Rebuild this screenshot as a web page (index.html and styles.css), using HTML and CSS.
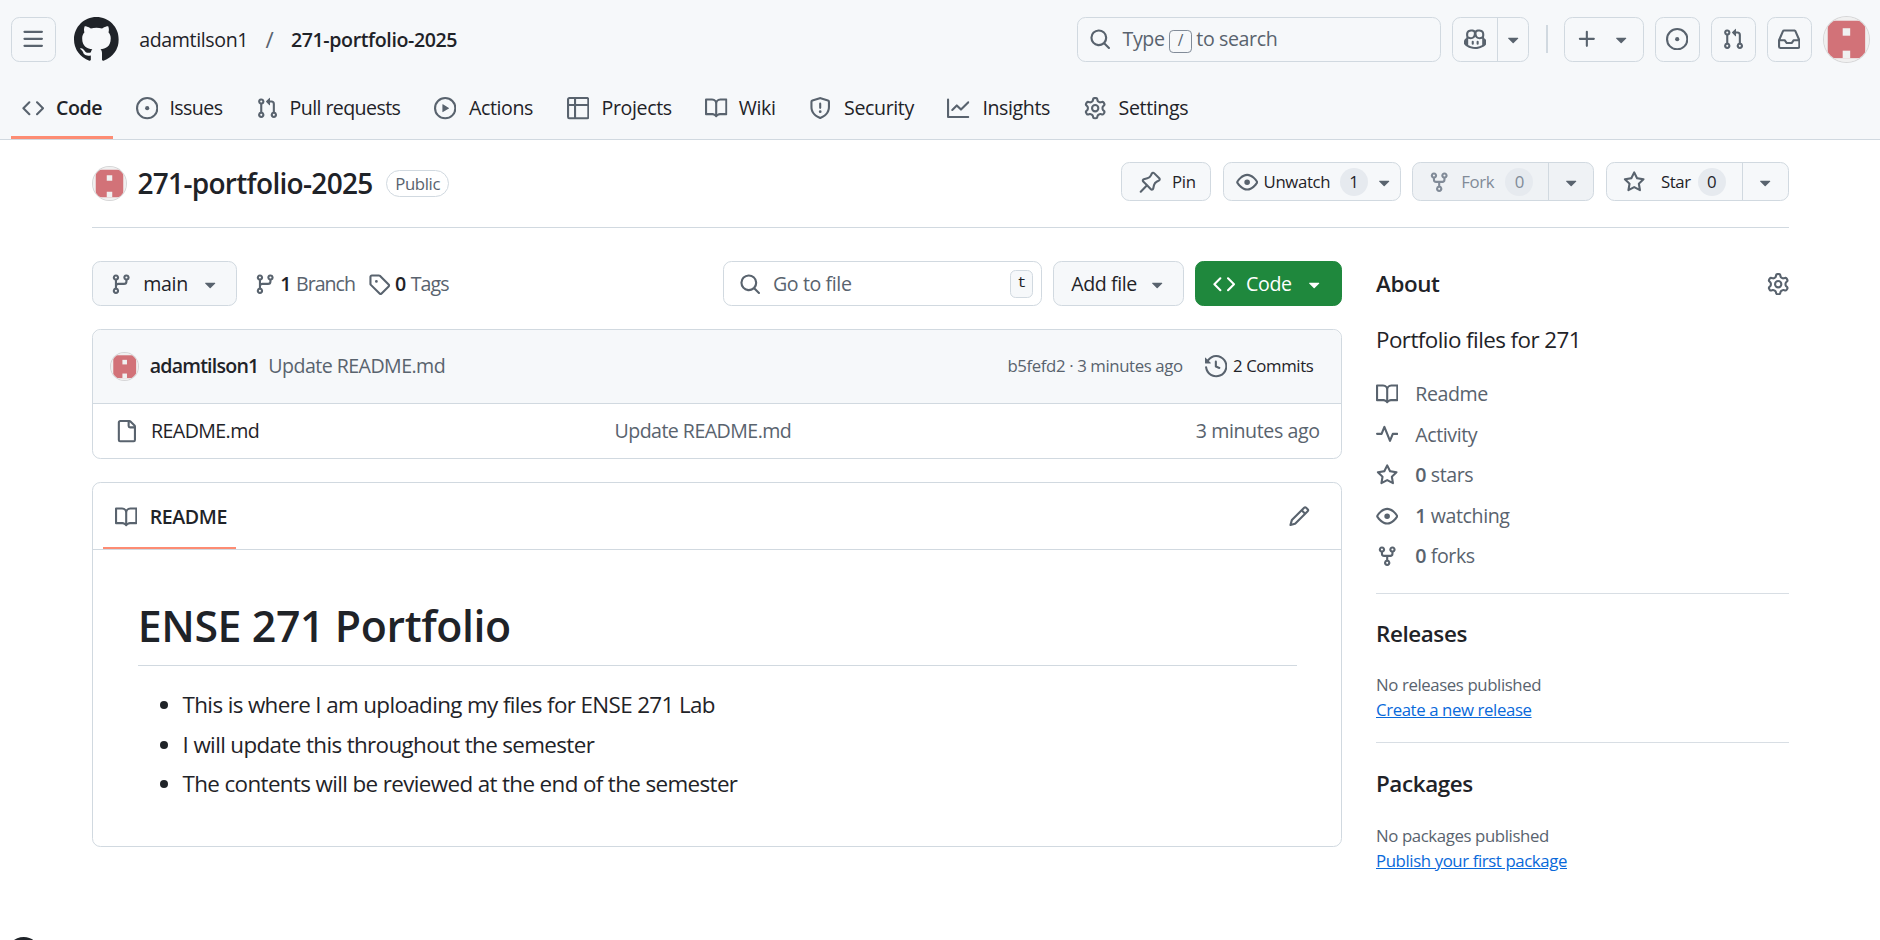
FILE: index.html
```html
<!DOCTYPE html>
<html lang="en">
<head>
  <meta charset="UTF-8" />
  <title>adamtilson1/271-portfolio-2025</title>
  <link rel="stylesheet" href="styles.css">
</head>
<body>

<svg class="sprite" xmlns="http://www.w3.org/2000/svg">
  <symbol id="i-mark" viewBox="0 0 16 16"><path d="M8 0c4.42 0 8 3.58 8 8a8.013 8.013 0 0 1-5.45 7.59c-.4.08-.55-.17-.55-.38 0-.27.01-1.13.01-2.2 0-.75-.25-1.23-.54-1.48 1.78-.2 3.65-.88 3.65-3.95 0-.88-.31-1.59-.82-2.15.08-.2.36-1.02-.08-2.12 0 0-.67-.22-2.2.82-.64-.18-1.32-.27-2-.27-.68 0-1.36.09-2 .27-1.53-1.03-2.2-.82-2.2-.82-.44 1.1-.16 1.92-.08 2.12-.51.56-.82 1.28-.82 2.15 0 3.06 1.86 3.75 3.64 3.95-.23.2-.44.55-.51 1.07-.46.21-1.61.55-2.33-.66-.15-.24-.6-.83-1.23-.82-.67.01-.27.38.01.53.34.19.73.9.82 1.13.16.45.68 1.31 2.69.94 0 .67.01 1.3.01 1.49 0 .21-.15.45-.55.38A7.995 7.995 0 0 1 0 8c0-4.42 3.58-8 8-8Z"/></symbol>
  <symbol id="i-bars" viewBox="0 0 16 16"><path d="M1 2.75A.75.75 0 0 1 1.75 2h12.5a.75.75 0 0 1 0 1.5H1.75A.75.75 0 0 1 1 2.75Zm0 5A.75.75 0 0 1 1.75 7h12.5a.75.75 0 0 1 0 1.5H1.75A.75.75 0 0 1 1 7.75ZM1.75 12h12.5a.75.75 0 0 1 0 1.5H1.75a.75.75 0 0 1 0-1.5Z"/></symbol>
  <symbol id="i-code" viewBox="0 0 16 16"><path d="m11.28 3.22 4.25 4.25a.75.75 0 0 1 0 1.06l-4.25 4.25a.749.749 0 0 1-1.275-.326.749.749 0 0 1 .215-.734L13.94 8l-3.72-3.72a.749.749 0 0 1 .326-1.275.749.749 0 0 1 .734.215Zm-6.56 0a.751.751 0 0 1 1.042.018.751.751 0 0 1 .018 1.042L2.06 8l3.72 3.72a.749.749 0 0 1-.326 1.275.749.749 0 0 1-.734-.215L.47 8.53a.75.75 0 0 1 0-1.06Z"/></symbol>
  <symbol id="i-issue" viewBox="0 0 16 16"><path d="M8 9.5a1.5 1.5 0 1 0 0-3 1.5 1.5 0 0 0 0 3Z"/><path d="M8 0a8 8 0 1 1 0 16A8 8 0 0 1 8 0ZM1.5 8a6.5 6.5 0 1 0 13 0 6.5 6.5 0 0 0-13 0Z"/></symbol>
  <symbol id="i-pr" viewBox="0 0 16 16"><path d="M1.5 3.25a2.25 2.25 0 1 1 3 2.122v5.256a2.251 2.251 0 1 1-1.5 0V5.372A2.25 2.25 0 0 1 1.5 3.25Zm5.677-.177L9.573.677A.25.25 0 0 1 10 .854V2.5h1A2.5 2.5 0 0 1 13.5 5v5.628a2.251 2.251 0 1 1-1.5 0V5a1 1 0 0 0-1-1h-1v1.646a.25.25 0 0 1-.427.177L7.177 3.427a.25.25 0 0 1 0-.354ZM3.75 2.5a.75.75 0 1 0 0 1.5.75.75 0 0 0 0-1.5Zm0 9.5a.75.75 0 1 0 0 1.5.75.75 0 0 0 0-1.5Zm8.25.75a.75.75 0 1 0 1.5 0 .75.75 0 0 0-1.5 0Z"/></symbol>
  <symbol id="i-play" viewBox="0 0 16 16"><path d="M8 0a8 8 0 1 1 0 16A8 8 0 0 1 8 0ZM1.5 8a6.5 6.5 0 1 0 13 0 6.5 6.5 0 0 0-13 0Zm4.879-2.773 4.264 2.559a.25.25 0 0 1 0 .428l-4.264 2.559A.25.25 0 0 1 6 10.559V5.442a.25.25 0 0 1 .379-.215Z"/></symbol>
  <symbol id="i-table" viewBox="0 0 16 16"><path d="M0 1.75C0 .784.784 0 1.75 0h12.5C15.216 0 16 .784 16 1.75v12.5A1.75 1.75 0 0 1 14.25 16H1.75A1.75 1.75 0 0 1 0 14.25ZM6.5 6.5v8h7.75a.25.25 0 0 0 .25-.25V6.5Zm8-1.5V1.75a.25.25 0 0 0-.25-.25H6.5V5Zm-13 1.5v7.75c0 .138.112.25.25.25H5v-8ZM5 5V1.5H1.75a.25.25 0 0 0-.25.25V5Z"/></symbol>
  <symbol id="i-book" viewBox="0 0 16 16"><path d="M0 1.75A.75.75 0 0 1 .75 1h4.253c1.227 0 2.317.59 3 1.501A3.743 3.743 0 0 1 11.006 1h4.245a.75.75 0 0 1 .75.75v10.5a.75.75 0 0 1-.75.75h-4.507a2.25 2.25 0 0 0-1.591.659l-.622.621a.75.75 0 0 1-1.06 0l-.622-.621A2.25 2.25 0 0 0 5.258 13H.75a.75.75 0 0 1-.75-.75Zm7.251 10.324.004-5.073-.002-2.253A2.25 2.25 0 0 0 5.003 2.5H1.5v9h3.757a3.75 3.75 0 0 1 1.994.574ZM8.755 4.75l-.004 7.322a3.752 3.752 0 0 1 1.992-.572H14.5v-9h-3.495a2.25 2.25 0 0 0-2.25 2.25Z"/></symbol>
  <symbol id="i-shield" viewBox="0 0 16 16"><path d="M7.467.133a1.748 1.748 0 0 1 1.066 0l5.25 1.68A1.75 1.75 0 0 1 15 3.48V7c0 1.566-.32 3.182-1.303 4.682-.983 1.498-2.585 2.813-5.032 3.855a1.697 1.697 0 0 1-1.33 0c-2.447-1.042-4.049-2.357-5.032-3.855C1.32 10.182 1 8.566 1 7V3.48a1.75 1.75 0 0 1 1.217-1.667Zm.61 1.429a.25.25 0 0 0-.153 0l-5.25 1.68a.25.25 0 0 0-.174.238V7c0 1.358.275 2.666 1.057 3.86.784 1.194 2.121 2.34 4.366 3.297a.196.196 0 0 0 .154 0c2.245-.956 3.582-2.104 4.366-3.298C13.225 9.666 13.5 8.36 13.5 7V3.48a.251.251 0 0 0-.174-.237l-5.25-1.68ZM8.75 4.75v3a.75.75 0 0 1-1.5 0v-3a.75.75 0 0 1 1.5 0ZM9 10.5a1 1 0 1 1-2 0 1 1 0 0 1 2 0Z"/></symbol>
  <symbol id="i-graph" viewBox="0 0 16 16"><path d="M1.5 1.75V13.5h13.75a.75.75 0 0 1 0 1.5H.75a.75.75 0 0 1-.75-.75V1.75a.75.75 0 0 1 1.5 0Zm14.28 2.53-5.25 5.25a.75.75 0 0 1-1.06 0L7 7.06 4.28 9.78a.751.751 0 0 1-1.042-.018.751.751 0 0 1-.018-1.042l3.25-3.25a.75.75 0 0 1 1.06 0L10 7.94l4.72-4.72a.751.751 0 0 1 1.042.018.751.751 0 0 1 .018 1.042Z"/></symbol>
  <symbol id="i-gear" viewBox="0 0 16 16"><path d="M8 0a8.2 8.2 0 0 1 .701.031C9.444.095 9.99.645 10.16 1.29l.288 1.107c.018.066.079.158.212.224.231.114.454.243.668.386.123.082.233.09.299.071l1.103-.303c.644-.176 1.392.021 1.82.63.27.385.506.792.704 1.218.315.675.111 1.422-.364 1.891l-.814.806c-.049.048-.098.147-.088.294.016.257.016.515 0 .772-.01.147.038.246.088.294l.814.806c.475.469.679 1.216.364 1.891a7.977 7.977 0 0 1-.704 1.217c-.428.61-1.176.807-1.82.63l-1.102-.302c-.067-.019-.177-.011-.3.071a5.909 5.909 0 0 1-.668.386c-.133.066-.194.158-.211.224l-.29 1.106c-.168.646-.715 1.196-1.458 1.26a8.006 8.006 0 0 1-1.402 0c-.743-.064-1.289-.614-1.458-1.26l-.289-1.106c-.018-.066-.079-.158-.212-.224a5.738 5.738 0 0 1-.668-.386c-.123-.082-.233-.09-.299-.071l-1.103.303c-.644.176-1.392-.021-1.82-.63a8.12 8.12 0 0 1-.704-1.218c-.315-.675-.111-1.422.363-1.891l.815-.806c.05-.048.098-.147.088-.294a6.214 6.214 0 0 1 0-.772c.01-.147-.038-.246-.088-.294l-.815-.806C.635 6.045.431 5.298.746 4.623a7.92 7.92 0 0 1 .704-1.217c.428-.61 1.176-.807 1.82-.63l1.102.302c.067.019.177.011.3-.071.214-.143.437-.272.668-.386.133-.066.194-.158.211-.224l.29-1.106C6.009.645 6.556.095 7.299.03 7.53.01 7.764 0 8 0Zm-.571 1.525c-.036.003-.108.036-.137.146l-.289 1.105c-.147.561-.549.967-.998 1.189-.173.086-.34.183-.5.29-.417.278-.97.423-1.529.27l-1.103-.303c-.109-.03-.175.016-.195.045-.22.312-.412.644-.573.99-.014.031-.021.11.059.19l.815.806c.411.406.562.957.53 1.456a4.709 4.709 0 0 0 0 .582c.032.499-.119 1.05-.53 1.456l-.815.806c-.081.08-.073.159-.059.19.162.346.353.677.573.989.02.03.085.076.195.046l1.102-.303c.56-.153 1.113-.008 1.53.27.161.107.328.204.501.29.447.222.85.629.997 1.189l.289 1.105c.029.109.101.143.137.146a6.6 6.6 0 0 0 1.142 0c.036-.003.108-.036.137-.146l.289-1.105c.147-.561.549-.967.998-1.189.173-.086.34-.183.5-.29.417-.278.97-.423 1.529-.27l1.103.303c.109.029.175-.016.195-.045.22-.313.411-.644.573-.99.014-.031.021-.11-.059-.19l-.815-.806c-.411-.406-.562-.957-.53-1.456a4.709 4.709 0 0 0 0-.582c-.032-.499.119-1.05.53-1.456l.815-.806c.081-.08.073-.159.059-.19a6.464 6.464 0 0 0-.573-.989c-.02-.03-.085-.076-.195-.046l-1.102.303c-.56.153-1.113.008-1.53-.27a4.44 4.44 0 0 0-.501-.29c-.447-.222-.85-.629-.997-1.189l-.289-1.105c-.029-.11-.101-.143-.137-.146a6.6 6.6 0 0 0-1.142 0ZM11 8a3 3 0 1 1-6 0 3 3 0 0 1 6 0ZM9.5 8a1.5 1.5 0 1 0-3.001.001A1.5 1.5 0 0 0 9.5 8Z"/></symbol>
  <symbol id="i-search" viewBox="0 0 16 16"><path d="M10.68 11.74a6 6 0 0 1-7.922-8.982 6 6 0 0 1 8.982 7.922l3.04 3.04a.749.749 0 0 1-.326 1.275.749.749 0 0 1-.734-.215ZM11.5 7a4.499 4.499 0 1 0-8.997 0A4.499 4.499 0 0 0 11.5 7Z"/></symbol>
  <symbol id="i-copilot" viewBox="0 0 16 16"><path d="M7.998 15.035c-4.562 0-7.873-2.914-7.998-3.749V9.338c.085-.628.677-1.686 1.588-2.065.013-.07.024-.143.036-.218.029-.183.06-.384.126-.612-.201-.508-.254-1.084-.254-1.656 0-.87.128-1.769.693-2.484.579-.733 1.494-1.124 2.724-1.261 1.206-.134 2.262.034 2.944.765.05.053.096.108.139.165.044-.057.094-.112.143-.165.682-.731 1.738-.899 2.944-.765 1.23.137 2.145.528 2.724 1.261.566.715.693 1.614.693 2.484 0 .572-.053 1.148-.254 1.656.066.228.098.429.126.612.012.076.024.148.037.218.924.385 1.522 1.471 1.591 2.095v1.872c0 .766-3.351 3.795-8.002 3.795Zm0-1.485c2.28 0 4.584-1.11 5.002-1.433V7.862l-.023-.116c-.49.21-1.075.291-1.727.291-1.146 0-2.059-.327-2.71-.991A3.222 3.222 0 0 1 8 6.303a3.24 3.24 0 0 1-.544.743c-.65.664-1.563.991-2.71.991-.652 0-1.236-.081-1.727-.291l-.023.116v4.255c.419.323 2.722 1.433 5.002 1.433ZM6.762 2.83c-.193-.206-.637-.413-1.682-.297-1.019.113-1.479.404-1.713.7-.247.312-.369.789-.369 1.554 0 .793.129 1.171.308 1.371.162.181.519.379 1.442.379.853 0 1.339-.235 1.638-.54.315-.322.527-.827.617-1.553.117-.935-.037-1.395-.241-1.614Zm4.155-.297c-1.044-.116-1.488.091-1.681.297-.204.219-.359.679-.242 1.614.091.726.303 1.231.618 1.553.299.305.784.54 1.638.54.922 0 1.28-.198 1.442-.379.179-.2.308-.578.308-1.371 0-.765-.123-1.242-.37-1.554-.233-.296-.693-.587-1.713-.7Z"/><path d="M6.25 9.037a.75.75 0 0 1 .75.75v1.501a.75.75 0 0 1-1.5 0V9.787a.75.75 0 0 1 .75-.75Zm4.25.75v1.501a.75.75 0 0 1-1.5 0V9.787a.75.75 0 0 1 1.5 0Z"/></symbol>
  <symbol id="i-plus" viewBox="0 0 16 16"><path d="M7.75 2a.75.75 0 0 1 .75.75V7h4.25a.75.75 0 0 1 0 1.5H8.5v4.25a.75.75 0 0 1-1.5 0V8.5H2.75a.75.75 0 0 1 0-1.5H7V2.75A.75.75 0 0 1 7.75 2Z"/></symbol>
  <symbol id="i-caret" viewBox="0 0 16 16"><path d="m4.427 7.427 3.396 3.396a.25.25 0 0 0 .354 0l3.396-3.396A.25.25 0 0 0 11.396 7H4.604a.25.25 0 0 0-.177.427Z"/></symbol>
  <symbol id="i-inbox" viewBox="0 0 16 16"><path d="M2.8 2.06A1.75 1.75 0 0 1 4.41 1h7.18c.7 0 1.333.417 1.61 1.06l2.74 6.395c.04.093.06.194.06.295v4.5A1.75 1.75 0 0 1 14.25 15H1.75A1.75 1.75 0 0 1 0 13.25v-4.5c0-.101.02-.202.06-.295Zm1.61.44a.25.25 0 0 0-.23.152L1.887 8H4.75a.75.75 0 0 1 .6.3L6.625 10h2.75l1.275-1.7a.75.75 0 0 1 .6-.3h2.863L11.82 2.652a.25.25 0 0 0-.23-.152Zm10.09 7h-2.875l-1.275 1.7a.75.75 0 0 1-.6.3h-3.5a.75.75 0 0 1-.6-.3L4.375 9.5H1.5v3.75c0 .138.112.25.25.25h12.5a.25.25 0 0 0 .25-.25Z"/></symbol>
  <symbol id="i-pin" viewBox="0 0 16 16"><path d="m11.294.984 3.722 3.722a1.75 1.75 0 0 1-.504 2.826l-1.327.613a3.089 3.089 0 0 0-1.707 2.084l-.584 2.454c-.317 1.332-1.972 1.8-2.94.832L5.75 11.311 1.78 15.28a.749.749 0 0 1-1.275-.326.749.749 0 0 1 .215-.734l3.97-3.97-2.204-2.204c-.968-.968-.5-2.623.832-2.94l2.454-.584a3.08 3.08 0 0 0 2.084-1.707l.613-1.327a1.75 1.75 0 0 1 2.825-.504ZM6.283 9.723l2.732 2.731a.25.25 0 0 0 .42-.119l.584-2.454a4.586 4.586 0 0 1 2.537-3.098l1.328-.613a.25.25 0 0 0 .072-.404l-3.722-3.722a.25.25 0 0 0-.404.072l-.613 1.328a4.584 4.584 0 0 1-3.098 2.537l-2.454.584a.25.25 0 0 0-.119.42l2.731 2.732Z"/></symbol>
  <symbol id="i-eye" viewBox="0 0 16 16"><path d="M8 2c1.981 0 3.671.992 4.933 2.078 1.27 1.091 2.187 2.345 2.637 3.023a1.62 1.62 0 0 1 0 1.798c-.45.678-1.367 1.932-2.637 3.023C11.67 13.008 9.981 14 8 14c-1.981 0-3.671-.992-4.933-2.078C1.797 10.83.88 9.576.43 8.898a1.62 1.62 0 0 1 0-1.798c.45-.677 1.367-1.931 2.637-3.022C4.33 2.992 6.019 2 8 2ZM1.679 7.932a.12.12 0 0 0 0 .136c.411.622 1.241 1.75 2.366 2.717C5.176 11.758 6.527 12.5 8 12.5c1.473 0 2.825-.742 3.955-1.715 1.124-.967 1.954-2.096 2.366-2.717a.12.12 0 0 0 0-.136c-.412-.621-1.242-1.75-2.366-2.717C10.824 4.242 9.473 3.5 8 3.5c-1.473 0-2.825.742-3.955 1.715-1.124.967-1.954 2.096-2.366 2.717ZM8 10a2 2 0 1 1-.001-3.999A2 2 0 0 1 8 10Z"/></symbol>
  <symbol id="i-fork" viewBox="0 0 16 16"><path d="M5 5.372v.878c0 .414.336.75.75.75h4.5a.75.75 0 0 0 .75-.75v-.878a2.25 2.25 0 1 1 1.5 0v.878a2.25 2.25 0 0 1-2.25 2.25h-1.5v2.128a2.251 2.251 0 1 1-1.5 0V8.5h-1.5A2.25 2.25 0 0 1 3.5 6.25v-.878a2.25 2.25 0 1 1 1.5 0ZM5 3.25a.75.75 0 1 0-1.5 0 .75.75 0 0 0 1.5 0Zm6.75.75a.75.75 0 1 0 0-1.5.75.75 0 0 0 0 1.5Zm-3 8.75a.75.75 0 1 0-1.5 0 .75.75 0 0 0 1.5 0Z"/></symbol>
  <symbol id="i-star" viewBox="0 0 16 16"><path d="M8 .25a.75.75 0 0 1 .673.418l1.882 3.815 4.21.612a.75.75 0 0 1 .416 1.279l-3.046 2.97.719 4.192a.751.751 0 0 1-1.088.791L8 12.347l-3.766 1.98a.75.75 0 0 1-1.088-.79l.72-4.194L.818 6.374a.75.75 0 0 1 .416-1.28l4.21-.611L7.327.668A.75.75 0 0 1 8 .25Zm0 2.445L6.615 5.5a.75.75 0 0 1-.564.41l-3.097.45 2.24 2.184a.75.75 0 0 1 .216.664l-.528 3.084 2.769-1.456a.75.75 0 0 1 .698 0l2.77 1.456-.53-3.084a.75.75 0 0 1 .216-.664l2.24-2.183-3.096-.45a.75.75 0 0 1-.564-.41L8 2.694Z"/></symbol>
  <symbol id="i-branch" viewBox="0 0 16 16"><path d="M9.5 3.25a2.25 2.25 0 1 1 3 2.122V6A2.5 2.5 0 0 1 10 8.5H6a1 1 0 0 0-1 1v1.128a2.251 2.251 0 1 1-1.5 0V5.372a2.25 2.25 0 1 1 1.5 0v1.836A2.493 2.493 0 0 1 6 7h4a1 1 0 0 0 1-1v-.628A2.25 2.25 0 0 1 9.5 3.25Zm-6 0a.75.75 0 1 0 1.5 0 .75.75 0 0 0-1.5 0Zm8.25-.75a.75.75 0 1 0 0 1.5.75.75 0 0 0 0-1.5ZM4.25 12a.75.75 0 1 0 0 1.5.75.75 0 0 0 0-1.5Z"/></symbol>
  <symbol id="i-tag" viewBox="0 0 16 16"><path d="M1 7.775V2.75C1 1.784 1.784 1 2.75 1h5.025c.464 0 .91.184 1.238.513l6.25 6.25a1.75 1.75 0 0 1 0 2.474l-5.026 5.026a1.75 1.75 0 0 1-2.474 0l-6.25-6.25A1.752 1.752 0 0 1 1 7.775Zm1.5 0c0 .066.026.13.073.177l6.25 6.25a.25.25 0 0 0 .354 0l5.025-5.025a.25.25 0 0 0 0-.354l-6.25-6.25a.25.25 0 0 0-.177-.073H2.75a.25.25 0 0 0-.25.25ZM6 5a1 1 0 1 1 0 2 1 1 0 0 1 0-2Z"/></symbol>
  <symbol id="i-history" viewBox="0 0 16 16"><path d="m.427 1.927 1.215 1.215a8.002 8.002 0 1 1-1.6 5.685.75.75 0 1 1 1.493-.154 6.5 6.5 0 1 0 1.18-4.458l1.358 1.358A.25.25 0 0 1 3.896 6H.25A.25.25 0 0 1 0 5.75V2.104a.25.25 0 0 1 .427-.177ZM7.75 4a.75.75 0 0 1 .75.75v2.992l2.028.812a.75.75 0 0 1-.557 1.392l-2.5-1A.751.751 0 0 1 7 8.25v-3.5A.75.75 0 0 1 7.75 4Z"/></symbol>
  <symbol id="i-file" viewBox="0 0 16 16"><path d="M2 1.75C2 .784 2.784 0 3.75 0h6.586c.464 0 .909.184 1.237.513l2.914 2.914c.329.328.513.773.513 1.237v9.586A1.75 1.75 0 0 1 13.25 16h-9.5A1.75 1.75 0 0 1 2 14.25Zm1.75-.25a.25.25 0 0 0-.25.25v12.5c0 .138.112.25.25.25h9.5a.25.25 0 0 0 .25-.25V6h-2.75A1.75 1.75 0 0 1 9 4.25V1.5Zm6.75.062V4.25c0 .138.112.25.25.25h2.688l-.011-.013-2.914-2.914-.013-.011Z"/></symbol>
  <symbol id="i-pencil" viewBox="0 0 16 16"><path d="M11.013 1.427a1.75 1.75 0 0 1 2.474 0l1.086 1.086a1.75 1.75 0 0 1 0 2.474l-8.61 8.61c-.21.21-.47.364-.756.445l-3.251.93a.75.75 0 0 1-.927-.928l.929-3.25c.081-.286.235-.547.445-.758l8.61-8.61Zm.176 4.823L9.75 4.81l-6.286 6.287a.253.253 0 0 0-.064.108l-.558 1.953 1.953-.558a.253.253 0 0 0 .108-.064Zm1.238-3.763a.25.25 0 0 0-.354 0L10.811 3.75l1.439 1.44 1.263-1.263a.25.25 0 0 0 0-.354Z"/></symbol>
  <symbol id="i-pulse" viewBox="0 0 16 16"><path d="M6 2c.306 0 .582.187.696.471L10 10.731l1.304-3.26A.751.751 0 0 1 12 7h3.25a.75.75 0 0 1 0 1.5h-2.742l-1.812 4.528a.751.751 0 0 1-1.392 0L6 4.77 4.696 8.03A.75.75 0 0 1 4 8.5H.75a.75.75 0 0 1 0-1.5h2.742l1.812-4.529A.751.751 0 0 1 6 2Z"/></symbol>
  <symbol id="i-avatar" viewBox="0 0 12 12"><rect width="12" height="12" fill="#f0f0f0"/><rect x="1" y="1" width="10" height="10" fill="#d27278"/><rect x="5" y="3" width="2" height="2" fill="#f0f0f0"/><rect x="5" y="9" width="2" height="2" fill="#f0f0f0"/></symbol>
</svg>

<header class="site-head">
  <div class="top-bar">
    <button class="icon-btn"><svg class="icon"><use href="#i-bars"/></svg></button>
    <svg class="logo"><use href="#i-mark"/></svg>
    <div class="crumbs">
      <span>adamtilson1</span>
      <span class="crumb-sep">/</span>
      <strong>271-portfolio-2025</strong>
    </div>
    <div class="top-actions">
      <div class="search">
        <svg class="icon"><use href="#i-search"/></svg>
        <span>Type <kbd>/</kbd> to search</span>
      </div>
      <div class="split top-split">
        <span class="split-main copilot"><svg class="icon"><use href="#i-copilot"/></svg></span>
        <span class="split-caret"><svg class="icon"><use href="#i-caret"/></svg></span>
      </div>
      <span class="top-sep"></span>
      <button class="icon-btn plus-btn"><svg class="icon"><use href="#i-plus"/></svg><svg class="icon"><use href="#i-caret"/></svg></button>
      <button class="icon-btn"><svg class="icon"><use href="#i-issue"/></svg></button>
      <button class="icon-btn"><svg class="icon"><use href="#i-pr"/></svg></button>
      <button class="icon-btn"><svg class="icon"><use href="#i-inbox"/></svg></button>
      <svg class="avatar avatar-top"><use href="#i-avatar"/></svg>
    </div>
  </div>
  <nav class="tabs">
    <a class="tab active"><svg class="icon"><use href="#i-code"/></svg>Code</a>
    <a class="tab tab-tight"><svg class="icon"><use href="#i-issue"/></svg>Issues</a>
    <a class="tab tab-tight"><svg class="icon"><use href="#i-pr"/></svg>Pull requests</a>
    <a class="tab tab-wide"><svg class="icon"><use href="#i-play"/></svg>Actions</a>
    <a class="tab tab-wide"><svg class="icon"><use href="#i-table"/></svg>Projects</a>
    <a class="tab"><svg class="icon"><use href="#i-book"/></svg>Wiki</a>
    <a class="tab tab-wide"><svg class="icon"><use href="#i-shield"/></svg>Security</a>
    <a class="tab tab-wide"><svg class="icon"><use href="#i-graph"/></svg>Insights</a>
    <a class="tab tab-wide"><svg class="icon"><use href="#i-gear"/></svg>Settings</a>
  </nav>
</header>

<main class="repo">
  <div class="repo-head">
    <svg class="avatar avatar-repo"><use href="#i-avatar"/></svg>
    <span class="repo-name">271-portfolio-2025</span>
    <span class="pill">Public</span>
    <div class="repo-actions">
      <button class="btn btn-sm pin-btn"><svg class="icon"><use href="#i-pin"/></svg>Pin</button>
      <button class="btn btn-sm watch-btn"><svg class="icon"><use href="#i-eye"/></svg>Unwatch<span class="count">1</span><svg class="icon caret"><use href="#i-caret"/></svg></button>
      <div class="split split-sm split-off">
        <span class="split-main"><svg class="icon"><use href="#i-fork"/></svg>Fork<span class="count">0</span></span>
        <span class="split-caret"><svg class="icon"><use href="#i-caret"/></svg></span>
      </div>
      <div class="split split-sm split-star">
        <span class="split-main"><svg class="icon"><use href="#i-star"/></svg><span class="star-label">Star</span><span class="count">0</span></span>
        <span class="split-caret"><svg class="icon"><use href="#i-caret"/></svg></span>
      </div>
    </div>
  </div>

  <div class="repo-body">
    <section class="files">
      <div class="file-bar">
        <button class="btn branch-btn"><svg class="icon"><use href="#i-branch"/></svg><span>main</span><svg class="icon caret"><use href="#i-caret"/></svg></button>
        <span class="ref"><svg class="icon"><use href="#i-branch"/></svg><b>1</b> Branch</span>
        <span class="ref ref-tags"><svg class="icon"><use href="#i-tag"/></svg><b>0</b> Tags</span>
        <div class="goto">
          <svg class="icon"><use href="#i-search"/></svg>
          <span>Go to file</span>
          <kbd class="goto-key">t</kbd>
        </div>
        <button class="btn add-btn">Add file<svg class="icon caret"><use href="#i-caret"/></svg></button>
        <button class="btn code-btn"><svg class="icon"><use href="#i-code"/></svg>Code<svg class="icon caret"><use href="#i-caret"/></svg></button>
      </div>

      <div class="box commits">
        <div class="commit-head">
          <svg class="avatar avatar-commit"><use href="#i-avatar"/></svg>
          <strong>adamtilson1</strong>
          <span class="muted commit-msg">Update README.md</span>
          <span class="commit-meta muted">b5fefd2 · 3 minutes ago</span>
          <span class="commit-count"><svg class="icon"><use href="#i-history"/></svg>2 Commits</span>
        </div>
        <div class="file-row">
          <span class="file-name"><svg class="icon"><use href="#i-file"/></svg>README.md</span>
          <span class="muted commit-msg">Update README.md</span>
          <span class="muted file-age">3 minutes ago</span>
        </div>
      </div>

      <article class="box readme">
        <div class="readme-head">
          <span class="readme-tab"><svg class="icon"><use href="#i-book"/></svg>README</span>
          <svg class="icon readme-edit"><use href="#i-pencil"/></svg>
        </div>
        <div class="readme-body">
          <h1>ENSE 271 Portfolio</h1>
          <ul>
            <li>This is where I am uploading my files for ENSE 271 Lab</li>
            <li>I will update this throughout the semester</li>
            <li>The contents will be reviewed at the end of the semester</li>
          </ul>
        </div>
      </article>
    </section>

    <aside class="side">
      <div class="side-block">
        <div class="about-title"><h2>About</h2><svg class="icon"><use href="#i-gear"/></svg></div>
        <p class="about-text">Portfolio files for 271</p>
        <ul class="about-list">
          <li><svg class="icon"><use href="#i-book"/></svg>Readme</li>
          <li><svg class="icon"><use href="#i-pulse"/></svg>Activity</li>
          <li><svg class="icon"><use href="#i-star"/></svg><span><b>0</b> stars</span></li>
          <li><svg class="icon"><use href="#i-eye"/></svg><span><b>1</b> watching</span></li>
          <li><svg class="icon"><use href="#i-fork"/></svg><span><b>0</b> forks</span></li>
        </ul>
      </div>
      <div class="side-block">
        <h2>Releases</h2>
        <p class="side-note">No releases published</p>
        <a class="side-link">Create a new release</a>
      </div>
      <div class="side-block">
        <h2>Packages</h2>
        <p class="side-note">No packages published</p>
        <a class="side-link">Publish your first package</a>
      </div>
    </aside>
  </div>
</main>

<footer class="foot">
  <svg class="foot-logo"><use href="#i-mark"/></svg>
</footer>

</body>
</html>
```

FILE: styles.css
```css
* { box-sizing: border-box; }
html { overflow: hidden; height: 100%; }
body {
  margin: 0;
  zoom: 1.4;
  font-family: "Open Sans", "Noto Sans", sans-serif;
  font-size: 14px;
  line-height: 20px;
  letter-spacing: -0.02em;
  color: #1f2328;
  background: #fff;
}
.sprite { display: none; }
button { font: inherit; letter-spacing: inherit; color: inherit; }
kbd { font: inherit; }
h1, h2, p, ul { margin: 0; padding: 0; }
.icon {
  width: 16px;
  height: 16px;
  fill: #59636e;
  flex: none;
}
.muted { color: #59636e; }

/* site header */
.site-head {
  height: 100px;
  background: #f6f8fa;
  border-bottom: 1px solid #d1d9e0;
}
.top-bar {
  display: flex;
  align-items: center;
  height: 44px;
  padding: 12px 7.4px 0 8px;
}
.icon-btn {
  display: flex;
  align-items: center;
  justify-content: center;
  width: 32px;
  height: 32px;
  padding: 0;
  background: transparent;
  border: 1px solid #d1d9e0;
  border-radius: 6px;
}
.logo {
  width: 32px;
  height: 32px;
  margin-left: 13px;
  fill: #1f2328;
}
.crumbs {
  display: flex;
  align-items: center;
  margin-left: 14.5px;
  margin-top: 1.5px;
}
.crumb-sep { margin: 0 12.5px; color: #59636e; font-size: 16px; }
.crumbs strong { font-weight: 600; }
.top-actions {
  display: flex;
  align-items: center;
  gap: 8px;
  margin-left: auto;
}
.search {
  display: flex;
  align-items: center;
  gap: 8px;
  width: 260px;
  height: 32px;
  padding: 0 8px;
  border: 1px solid #d1d9e0;
  border-radius: 6px;
  color: #59636e;
}
.search kbd {
  display: inline-block;
  width: 16px;
  height: 16px;
  line-height: 14px;
  text-align: center;
  font-size: 11px;
  border: 1px solid #818b98;
  border-radius: 3px;
}
.split {
  display: flex;
  height: 32px;
  border: 1px solid #d1d9e0;
  border-radius: 6px;
}
.split-main, .split-caret {
  display: flex;
  align-items: center;
  justify-content: center;
}
.top-split .split-main { width: 32.5px; border-right: 1px solid #d1d9e0; }
.top-split .split-caret { width: 21px; }
.top-sep {
  width: 1px;
  height: 20px;
  margin: 0 3.5px 0 4.5px;
  background: #d1d9e0;
}
.plus-btn { width: 57.5px; gap: 8px; margin-right: -0.5px; }
.avatar {
  display: block;
  flex: none;
  border-radius: 50%;
  background: #f0f0f0;
  border: 1px solid rgba(31, 35, 40, 0.12);
}
.avatar-top { width: 33.5px; height: 33.5px; }

.tabs {
  display: flex;
  gap: 8px;
  margin-top: 12px;
  padding: 0 8px;
}
.tab {
  position: relative;
  display: flex;
  align-items: center;
  gap: 8px;
  height: 43px;
  padding: 0 8px;
  color: #1f2328;
  white-space: nowrap;
}
.tab-tight { letter-spacing: -0.03em; }
.tab-wide { gap: 9px; }
.tab.active { font-weight: 600; }
.tab.active::after {
  content: "";
  position: absolute;
  left: 0;
  right: 0;
  bottom: 0;
  height: 2px;
  background: #fd8c73;
}

/* repo page */
.repo { padding: 0 65px 0 65.7px; }
.repo-head {
  display: flex;
  align-items: center;
  height: 62.7px;
  border-bottom: 1px solid #d1d9e0;
}
.avatar-repo { width: 25px; height: 25px; margin-right: 7.5px; }
.repo-name { font-size: 20px; font-weight: 600; letter-spacing: -0.025em; }
.pill {
  margin-left: 9.5px;
  padding: 0 6px;
  font-size: 12px;
  line-height: 18px;
  font-weight: 500;
  color: #59636e;
  border: 1px solid #d1d9e0;
  border-radius: 10px;
}
.repo-actions {
  display: flex;
  gap: 8px;
  margin-left: auto;
  margin-bottom: 2.3px;
}
.btn {
  display: inline-flex;
  align-items: center;
  height: 32px;
  padding: 0 12px;
  background: #f6f8fa;
  border: 1px solid #d1d9e0;
  border-radius: 6px;
  font-weight: 500;
  white-space: nowrap;
}
.btn-sm, .split-sm { height: 28px; font-size: 12px; }
.split-sm { background: #f6f8fa; }
.split-sm .split-main { flex: 1; gap: 8px; padding: 0 8px; border-right: 1px solid #d1d9e0; font-weight: 500; }
.split-sm .split-caret { width: 32px; }
.pin-btn { width: 64.4px; gap: 8px; margin-right: 1px; }
.watch-btn { width: 127px; gap: 4px; padding: 0 8px; }
.watch-btn .count { margin-left: 3px; }
.split-sm { width: 130px; }
.split-star { width: 131px; }
.star-label { margin-left: 3px; margin-right: -3px; }
.split-off { background: #eff2f5; color: #818b98; }
.split-off .icon { fill: #818b98; }
.split-off .split-caret .icon { fill: #59636e; }
.count {
  min-width: 20px;
  padding: 0 6px;
  border-radius: 10px;
  line-height: 20px;
  text-align: center;
  background: #e6eaef;
}
.caret { margin-left: auto; }

.repo-body {
  display: flex;
  gap: 24px;
  padding-top: 24px;
}
.files { flex: 1; min-width: 0; }
.file-bar {
  display: flex;
  align-items: center;
  gap: 8px;
}
.branch-btn { width: 103.5px; gap: 8px; padding: 0 14px 0 12px; }
.ref {
  display: inline-flex;
  align-items: center;
  gap: 2px;
  margin-left: 4px;
  color: #59636e;
  white-space: pre;
  letter-spacing: -0.05em;
  word-spacing: -1px;
}
.ref b { color: #1f2328; font-weight: 600; margin-left: 1px; }
.ref-tags { margin-left: 1.6px; }
.goto {
  display: flex;
  align-items: center;
  gap: 8px;
  width: 228px;
  height: 32px;
  margin-left: auto;
  padding: 0 4px 0 11px;
  border: 1px solid #d1d9e0;
  border-radius: 6px;
  color: #59636e;
}
.goto-key {
  margin-left: auto;
  width: 16px;
  height: 20px;
  font-family: "Liberation Mono", monospace;
  font-size: 11px;
  line-height: 18px;
  text-align: center;
  color: #1f2328;
  background: #f6f8fa;
  border: 1px solid #d1d9e0;
  border-radius: 4px;
  margin-right: 2px;
}
.add-btn { width: 93px; padding-right: 10px; }
.code-btn {
  width: 105.5px;
  gap: 8px;
  color: #fff;
  background: #1f883d;
  border-color: #1f883d;
}
.code-btn .icon { fill: #fff; }

.box {
  border: 1px solid #d1d9e0;
  border-radius: 6px;
}
.commits { margin-top: 16px; }
.commit-head {
  display: flex;
  align-items: center;
  height: 53.5px;
  padding: 0 20px 0 12px;
  background: #f6f8fa;
  border-bottom: 1px solid #d1d9e0;
  border-radius: 6px 6px 0 0;
}
.avatar-commit { width: 21px; height: 21px; margin-right: 7.5px; }
.commit-head strong { font-weight: 600; margin-right: 7px; letter-spacing: -0.04em; }
.commit-msg { letter-spacing: -0.028em; }
.commit-meta { margin-left: auto; font-size: 12px; }
.commit-count {
  display: inline-flex;
  align-items: center;
  gap: 4px;
  margin-left: 16px;
  font-size: 12px;
  font-weight: 500;
}
.file-row {
  display: flex;
  align-items: center;
  height: 38.5px;
  padding: 0 15.5px;
}
.file-name { display: flex; align-items: center; gap: 10px; width: 357px; letter-spacing: -0.03em; }
.file-age { margin-left: auto; }

.readme { margin-top: 16px; height: 261px; }
.readme-head {
  display: flex;
  align-items: center;
  height: 48px;
  padding-left: 7px;
  padding-right: 22px;
  border-bottom: 1px solid #d1d9e0;
}
.readme-tab {
  display: flex;
  align-items: center;
  gap: 9px;
  width: 95px;
  height: 47px;
  padding: 3px 8.5px 0;
  font-weight: 600;
  border-bottom: 2px solid #fd8c73;
}
.readme-edit { margin-left: auto; }
.readme-body { padding: 34px 32px 0; }
.readme-body h1 {
  font-size: 30.6px;
  line-height: 40px;
  font-weight: 600;
  padding-bottom: 8px;
  border-bottom: 1px solid #d1d9e0;
}
.readme-body ul {
  margin-top: 16px;
  padding-left: 32px;
  font-size: 16px;
  line-height: 24px;
  letter-spacing: -0.028em;
}
.readme-body li + li { margin-top: 4.3px; }

.side { width: 295px; flex: none; }
.side-block { padding-bottom: 14px; margin-bottom: 17px; border-bottom: 1px solid #d8dee4; }
.side-block:first-child { padding-bottom: 11.7px; margin-bottom: 16px; }
.side-block:last-child { padding: 0; margin: 0; border-bottom: 0; }
.side h2 { font-size: 16px; line-height: 24px; font-weight: 600; }
.about-title {
  display: flex;
  align-items: center;
  justify-content: space-between;
  height: 32px;
}
.about-text { margin-top: 12.3px; font-size: 16px; line-height: 24px; letter-spacing: -0.025em; }
.about-list { margin-top: 12px; list-style: none; color: #59636e; }
.about-list li {
  display: flex;
  align-items: center;
  gap: 12px;
  height: 29px;
}
.about-list b { font-weight: 600; }
.side-note { margin-top: 17px; font-size: 12px; line-height: 15px; color: #59636e; }
.side-link {
  display: inline-block;
  font-size: 12px;
  line-height: 18px;
  color: #0969da;
  text-decoration: underline;
}

.foot { padding-left: 4.7px; margin-top: 45px; }
.foot-logo { display: block; width: 24px; height: 24px; fill: #1f2328; }
```
